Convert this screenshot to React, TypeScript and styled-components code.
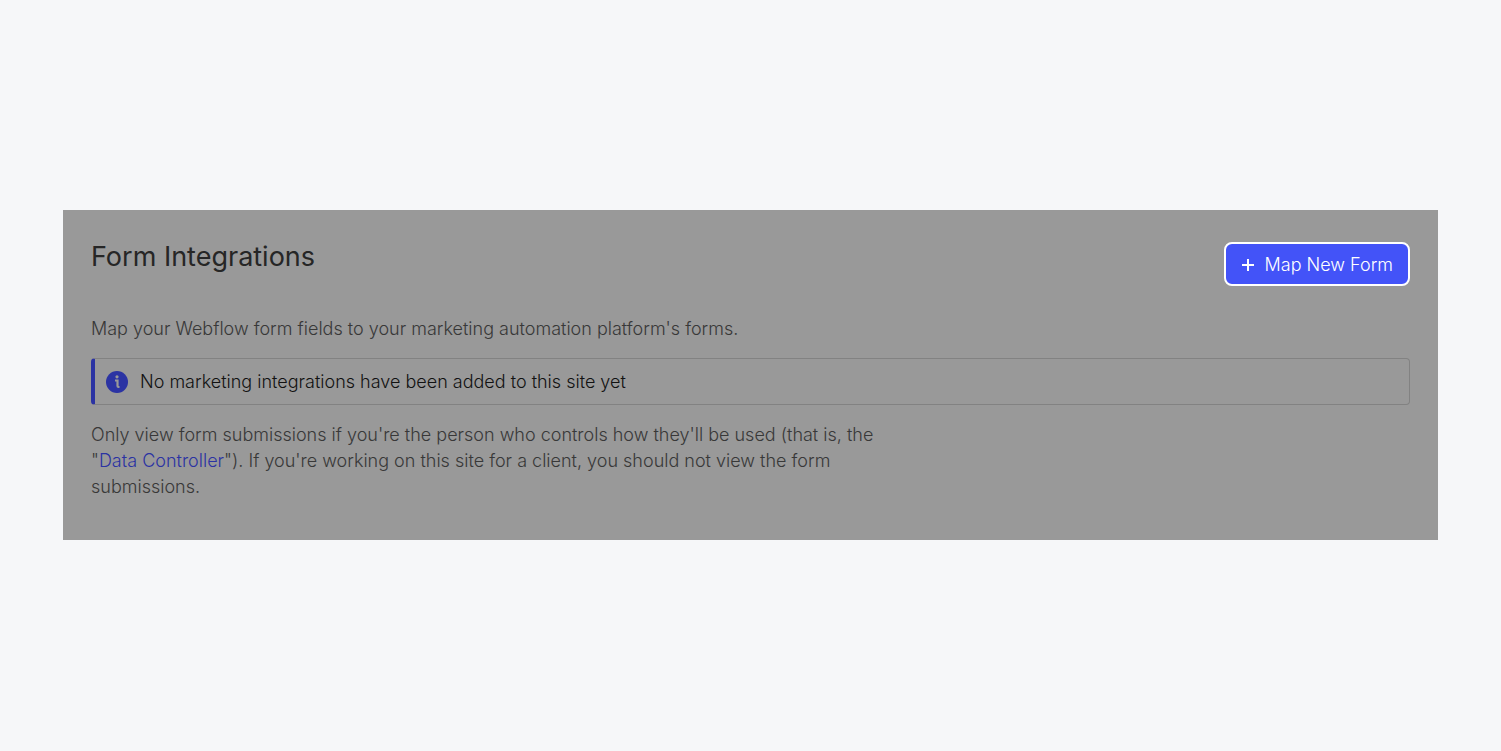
import React from "react";
import styled, { createGlobalStyle } from "styled-components";

const GlobalStyle = createGlobalStyle`
  * { box-sizing: border-box; }
  body {
    margin: 0;
    background: #f6f7f9;
    font-family: Inter, "Liberation Sans", sans-serif;
  }
`;

const Page = styled.main`
  min-height: 100vh;
  display: flex;
  align-items: center;
  padding: 32px 63px 33px;
`;

const Panel = styled.section`
  flex: 1;
  min-width: 0;
  padding: 28px 28px 40px;
  background: #999999;
  color: #383838;
  font-size: 18px;
  font-weight: 300;
  line-height: 26px;
`;

const Header = styled.header`
  display: flex;
  justify-content: space-between;
  align-items: flex-start;
  margin-bottom: 30px;
`;

const Title = styled.h1`
  margin: 0;
  font-size: 27px;
  font-weight: 400;
  line-height: 38px;
  color: #262626;
`;

const MapButton = styled.button`
  display: flex;
  align-items: center;
  gap: 10px;
  height: 44px;
  margin-top: 4px;
  padding: 1px 15px 0;
  border: 2px solid #ffffff;
  border-radius: 8px;
  background: #4353f8;
  color: #ffffff;
  font: inherit;
`;

const Paragraph = styled.p`
  max-width: 800px;
  margin: 0;
`;

const Notice = styled.div`
  display: flex;
  align-items: center;
  gap: 12px;
  margin: 16px 0 17px;
  height: 47px;
  padding: 0 11px;
  border: 1px solid #828282;
  border-left: 4px solid #2b33a3;
  border-radius: 4px;
  color: #121212;
`;

const Link = styled.a`
  color: #2b33a3;
  text-decoration: none;
`;

export default function App() {
  return (
    <>
      <GlobalStyle />
      <Page>
        <Panel>
          <Header>
            <Title>Form Integrations</Title>
            <MapButton type="button">
              <svg width="14" height="14" viewBox="0 0 14 14" aria-hidden="true">
                <path d="M7 1v12M1 7h12" stroke="currentColor" strokeWidth="2" />
              </svg>
              Map New Form
            </MapButton>
          </Header>
          <Paragraph>Map your Webflow form fields to your marketing automation platform's forms.</Paragraph>
          <Notice role="status">
            <svg width="22" height="22" viewBox="0 0 22 22" aria-hidden="true">
              <circle cx="11" cy="11" r="11" fill="#2b33a3" />
              <path d="M9 9.5h2.5v5.5q0 1 1 1h1" stroke="#999999" strokeWidth="2.2" fill="none" />
              <circle cx="11" cy="5.8" r="1.6" fill="#999999" />
            </svg>
            No marketing integrations have been added to this site yet
          </Notice>
          <Paragraph>
            Only view form submissions if you're the person who controls how they'll be used (that is, the
            "<Link href="#data-controller">Data Controller</Link>"). If you're working on this site for a client, you
            should not view the form submissions.
          </Paragraph>
        </Panel>
      </Page>
    </>
  );
}
